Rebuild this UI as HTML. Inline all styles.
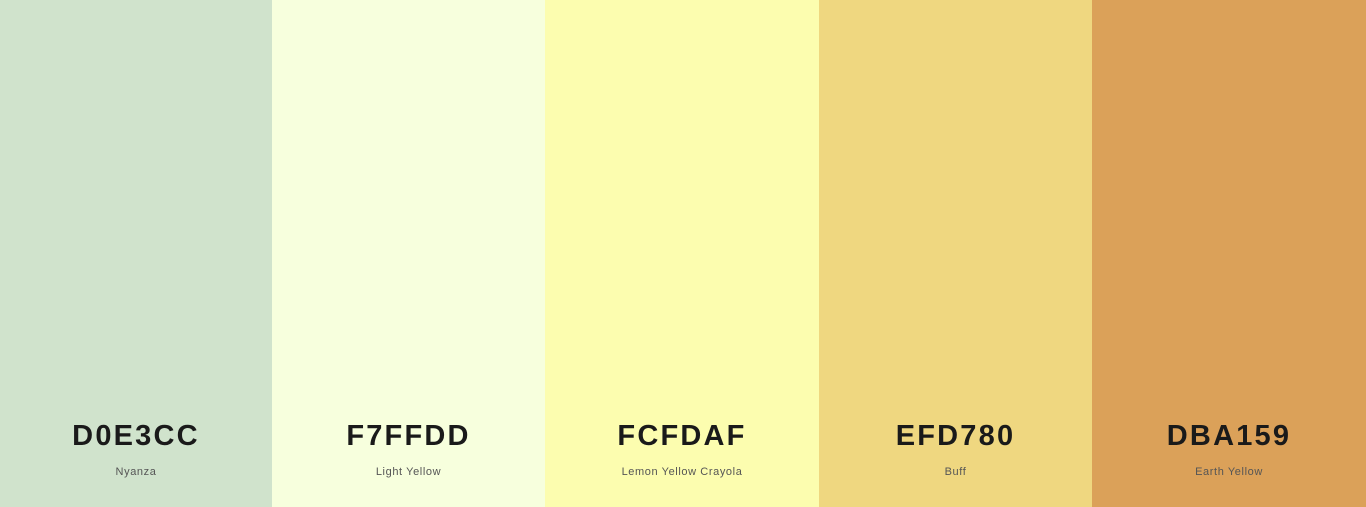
<!DOCTYPE html>
<html><head><meta charset="utf-8"><style>
html,body{margin:0;padding:0;width:1366px;height:507px;overflow:hidden}
.w{display:flex;width:1366px;height:507px}
.c{position:relative;flex:none}
.h{position:absolute;left:0;right:0;top:416px;text-align:center;font-family:"Liberation Sans",sans-serif;font-size:29px;font-weight:bold;letter-spacing:2.2px;color:#1a1a1a;line-height:40px}
.n{position:absolute;left:0;right:0;top:464px;text-align:center;font-family:"Liberation Sans",sans-serif;font-size:11px;letter-spacing:0.6px;color:#555;line-height:16px}
</style></head><body><div class="w">
<div class="c" style="width:272px;background:#D0E3CC"><div class="h">D0E3CC</div><div class="n">Nyanza</div></div>
<div class="c" style="width:273px;background:#F7FFDD"><div class="h">F7FFDD</div><div class="n">Light Yellow</div></div>
<div class="c" style="width:274px;background:#FCFDAF"><div class="h">FCFDAF</div><div class="n">Lemon Yellow Crayola</div></div>
<div class="c" style="width:273px;background:#EFD780"><div class="h">EFD780</div><div class="n">Buff</div></div>
<div class="c" style="width:274px;background:#DBA159"><div class="h">DBA159</div><div class="n">Earth Yellow</div></div>
</div></body></html>
